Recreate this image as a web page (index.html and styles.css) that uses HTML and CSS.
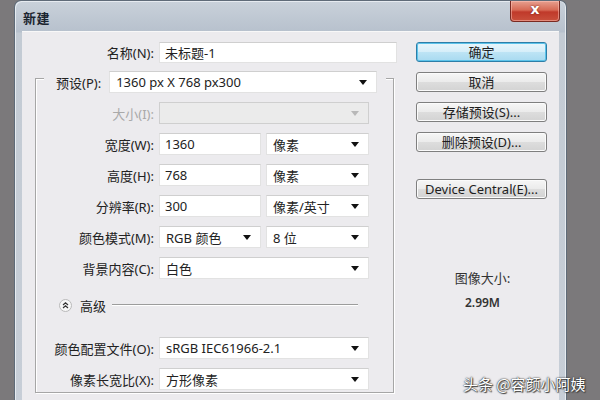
FILE: index.html
```html
<!DOCTYPE html>
<html lang="zh-CN">
<head>
<meta charset="utf-8">
<title>新建</title>
<link rel="stylesheet" href="styles.css">
</head>
<body>
<div class="window">
  <div class="titlebar">
    <span class="title">新建</span>
    <div class="close">x</div>
  </div>
  <div class="panel">
    <div class="left">
      <div class="row name-row">
        <span class="lbl lbl-name">名称(N):</span>
        <div class="field w-name">未标题-1</div>
      </div>
      <div class="group">
        <div class="legend">
          <span class="legend-lbl">预设(P):</span>
          <div class="select w-preset">1360 px X 768 px300<span class="arrow"></span></div>
        </div>
        <div class="rows">
          <div class="row">
            <span class="lbl disabled">大小(I):</span>
            <div class="select w-full is-disabled"><span></span><span class="arrow"></span></div>
          </div>
          <div class="row">
            <span class="lbl">宽度(W):</span>
            <div class="field w-half">1360</div>
            <div class="select w-half2">像素<span class="arrow"></span></div>
          </div>
          <div class="row">
            <span class="lbl">高度(H):</span>
            <div class="field w-half">768</div>
            <div class="select w-half2">像素<span class="arrow"></span></div>
          </div>
          <div class="row">
            <span class="lbl">分辨率(R):</span>
            <div class="field w-half">300</div>
            <div class="select w-half2">像素/英寸<span class="arrow"></span></div>
          </div>
          <div class="row">
            <span class="lbl">颜色模式(M):</span>
            <div class="select w-half">RGB 颜色<span class="arrow"></span></div>
            <div class="select w-half2">8 位<span class="arrow"></span></div>
          </div>
          <div class="row">
            <span class="lbl">背景内容(C):</span>
            <div class="select w-full">白色<span class="arrow"></span></div>
          </div>
          <div class="adv-row">
            <svg class="adv-icon" width="13" height="13" viewBox="0 0 13 13">
              <circle cx="6.5" cy="6.5" r="6" fill="#f7f7f7" stroke="#b9b9b9"/>
              <polyline points="4,6 6.5,3.8 9,6" fill="none" stroke="#333" stroke-width="1.2"/>
              <polyline points="4,9 6.5,6.8 9,9" fill="none" stroke="#333" stroke-width="1.2"/>
            </svg>
            <span class="adv-text">高级</span>
            <span class="adv-line"></span>
          </div>
          <div class="row row-profile">
            <span class="lbl">颜色配置文件(O):</span>
            <div class="select w-full">sRGB IEC61966-2.1<span class="arrow"></span></div>
          </div>
          <div class="row">
            <span class="lbl">像素长宽比(X):</span>
            <div class="select w-full">方形像素<span class="arrow"></span></div>
          </div>
        </div>
      </div>
    </div>
    <div class="right">
      <div class="btn btn-default">确定</div>
      <div class="btn">取消</div>
      <div class="btn">存储预设(S)...</div>
      <div class="btn">删除预设(D)...</div>
      <div class="btn btn-device">Device Central(E)...</div>
      <div class="info">
        <div class="info-label">图像大小:</div>
        <div class="info-value">2.99M</div>
      </div>
    </div>
  </div>
</div>
<div class="watermark">头条 @容颜小阿姨</div>
</body>
</html>
```

FILE: styles.css
```css
html, body {
  margin: 0;
  padding: 0;
}

body {
  width: 600px;
  height: 400px;
  overflow: hidden;
  background: #7b797b;
  position: relative;
  font-family: "Noto Sans", "Noto Sans CJK SC", sans-serif;
  font-size: 13px;
  color: #1e1e1e;
}

.window {
  margin-left: 14px;
  width: 553px;
  height: 420px;
  box-sizing: border-box;
  padding: 0 7px;
  border-radius: 7px 7px 0 0;
  background: linear-gradient(to bottom, #c9d1da 0px, #b7c1cd 31px, #c3cbd4 32px, #c7ced7 100%);
  border: 1px solid #5f6b78;
  border-bottom: none;
  box-shadow: inset 1px 1px 0 #e6ebf0, inset -1px 0 0 #e6ebf0;
}

.titlebar {
  height: 30px;
  display: flex;
  align-items: flex-start;
}

.title {
  margin-top: 7px;
  margin-left: 1px;
  font-family: "Noto Sans CJK SC", sans-serif;
  font-size: 13px;
  font-weight: 700;
  color: #1c2530;
  letter-spacing: 0.5px;
}

.close {
  margin-left: auto;
  margin-right: -1px;
  width: 50px;
  height: 21px;
  box-sizing: border-box;
  border: 1px solid #7a2a22;
  border-top: none;
  border-radius: 0 0 4px 4px;
  background: linear-gradient(to bottom, #e7a08f 0%, #d76a55 45%, #c0392a 55%, #c9503c 100%);
  box-shadow: inset 0 0 0 1px rgba(255, 200, 190, 0.5);
  color: #fff;
  font-family: "DejaVu Sans", sans-serif;
  font-weight: 700;
  font-size: 14px;
  line-height: 17px;
  text-align: center;
  text-shadow: 0 0 2px #6b1a10;
}

.panel {
  display: flex;
  height: 369px;
  background: #ecebee;
  border-top: 1px solid #f8f8f8;
  box-sizing: border-box;
}

.left {
  width: 379px;
  box-sizing: border-box;
  padding: 10px 0 0 13px;
}

.row {
  display: flex;
  align-items: center;
  gap: 5px;
  height: 22px;
}

.name-row {
  height: 21px;
}

.lbl {
  width: 118px;
  text-align: right;
  white-space: nowrap;
  font-family: "Noto Sans", "Noto Sans CJK SC", sans-serif;
  color: #222;
}

.lbl-name {
  width: 119px;
}

.lbl.disabled {
  color: #a9a9a9;
}

.field,
.select {
  height: 100%;
  box-sizing: border-box;
  background: #fff;
  border: 1px solid #e2e2e2;
  border-top-color: #cfcfcf;
  display: flex;
  align-items: center;
  padding: 0 9px 0 5px;
  white-space: nowrap;
  color: #222;
}

.select {
  justify-content: space-between;
  padding-left: 6px;
}

.arrow {
  width: 0;
  height: 0;
  border-left: 4px solid transparent;
  border-right: 4px solid transparent;
  border-top: 5px solid #111;
}

.is-disabled {
  background: #ebebeb;
  border-color: #cfcfcf;
}

.is-disabled .arrow {
  border-top-color: #b8b8b8;
}

.w-name { width: 238px; }
.w-preset { width: 268px; height: 22px; margin-left: 8px; }
.w-full { width: 210px; }
.w-half { width: 102px; }
.w-half2 { width: 103px; }

.group {
  margin-top: 15px;
  width: 359px;
  height: 315px;
  box-sizing: border-box;
  border: 1px solid #a6a6a6;
  box-shadow: 1px 1px 0 #fff, inset 1px 1px 0 #fff;
}

.legend {
  display: flex;
  align-items: center;
  margin-top: -8px;
  margin-left: 8px;
  width: max-content;
  height: 22px;
  padding: 0 9px 0 12px;
  background: #ecebee;
}

.legend-lbl {
  white-space: nowrap;
  color: #222;
}

.rows {
  display: flex;
  flex-direction: column;
  gap: 9px;
  padding-top: 9px;
}

.adv-row {
  display: flex;
  align-items: center;
  height: 14px;
  margin-top: 10px;
  padding-left: 23px;
}

.adv-icon {
  display: block;
}

.adv-text {
  margin-left: 8px;
  font-family: "Noto Sans CJK SC", sans-serif;
  color: #222;
}

.adv-line {
  flex: 1;
  margin: 0 35px 0 6px;
  height: 0;
  border-top: 1px solid #9c9c9c;
  border-bottom: 1px solid #fff;
}

.row-profile {
  margin-top: 16px;
}

.right {
  width: 131px;
  margin-left: 15px;
  padding-top: 10px;
  display: flex;
  flex-direction: column;
  gap: 10px;
}

.btn {
  height: 20px;
  box-sizing: border-box;
  border: 1px solid #7f7f7f;
  border-radius: 3px;
  background: linear-gradient(to bottom, #f6f6f6 0%, #ebebeb 50%, #dddddd 51%, #d3d3d3 100%);
  box-shadow: inset 0 0 0 1px #fbfbfb;
  text-align: center;
  line-height: 18px;
  color: #1e1e1e;
  white-space: nowrap;
}

.btn-default {
  border: 1px solid #2d7ea8;
  background: linear-gradient(to bottom, #e9f6fc 0%, #d5eef9 50%, #bde4f5 51%, #a8daf0 100%);
  box-shadow: inset 0 0 0 1px #5cc3ea;
}

.btn-device {
  margin-top: 17px;
}

.info {
  margin-top: 60px;
  text-align: center;
  padding-left: 2px;
}

.info-label {
  font-family: "Noto Sans CJK SC", sans-serif;
  font-size: 13px;
  color: #333;
  line-height: 18px;
}

.info-value {
  margin-top: 8px;
  font-size: 12px;
  font-weight: 600;
  color: #333;
  line-height: 16px;
}

.watermark {
  position: absolute;
  left: 463px;
  top: 373px;
  font-family: "Noto Sans CJK SC", sans-serif;
  font-size: 15px;
  color: #fff;
  white-space: nowrap;
  text-shadow: 0 0 2px #333, 0 0 1px #333, 1px 1px 1px #444;
}
```
